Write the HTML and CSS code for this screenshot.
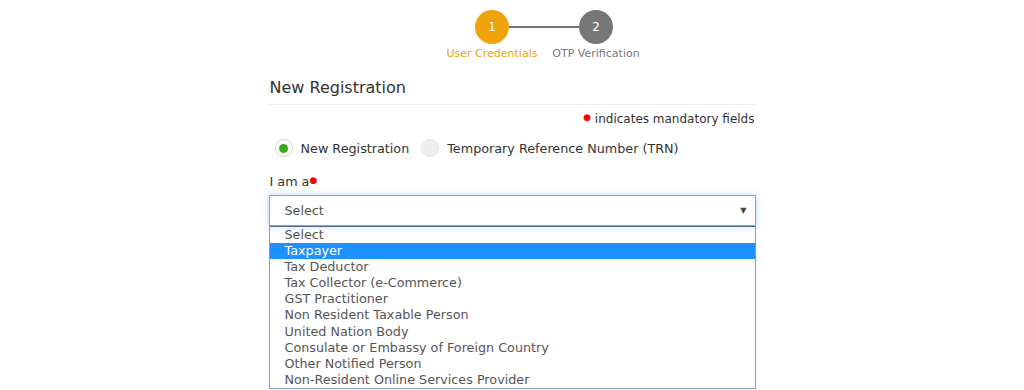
FILE: index.html
```html
<!DOCTYPE html>
<html lang="en">
<head>
  <meta charset="UTF-8">
  <title>New Registration</title>
  <link rel="stylesheet" href="styles.css">
</head>
<body>
  <div class="steps">
    <div class="step active">
      <div class="step-circle">1</div>
      <div class="step-label">User Credentials</div>
    </div>
    <div class="step-line"></div>
    <div class="step">
      <div class="step-circle">2</div>
      <div class="step-label">OTP Verification</div>
    </div>
  </div>

  <div class="panel">
    <h2 class="panel-title">New Registration</h2>
    <p class="mandatory"><span class="req">&#9679;</span> indicates mandatory fields</p>

    <div class="radio-row">
      <label class="radio checked"><span class="radio-dot"></span>New Registration</label>
      <label class="radio"><span class="radio-dot"></span>Temporary Reference Number (TRN)</label>
    </div>

    <div class="field-label">I am a<span class="req">&#9679;</span></div>
    <div class="select-box">
      <span>Select</span>
      <span class="caret">&#9660;</span>
    </div>
    <ul class="options">
      <li>Select</li>
      <li class="hover">Taxpayer</li>
      <li>Tax Deductor</li>
      <li>Tax Collector (e-Commerce)</li>
      <li>GST Practitioner</li>
      <li>Non Resident Taxable Person</li>
      <li>United Nation Body</li>
      <li>Consulate or Embassy of Foreign Country</li>
      <li>Other Notified Person</li>
      <li>Non-Resident Online Services Provider</li>
    </ul>
  </div>
</body>
</html>
```

FILE: styles.css
```css
body {
  margin: 0;
  background: #fff;
  font-family: 'DejaVu Sans', Verdana, sans-serif;
  color: #333;
  overflow: hidden;
}
.steps { display: flex; justify-content: center; align-items: flex-start; padding: 10px 0 0 64px; }
.step { display: flex; flex-direction: column; align-items: center; width: 104px; }
.step-circle {
  width: 34px; height: 34px; border-radius: 50%;
  background: #777; color: #fff;
  font-size: 12px; line-height: 34px; text-align: center;
}
.step.active .step-circle { background: #f0a30a; }
.step-label { font-size: 11px; color: #777; margin-top: 3px; white-space: nowrap; }
.step.active .step-label { color: #f0a30a; }
.step-line { width: 70px; height: 2px; background: #777; margin: 16px -35px 0; }
.panel { width: 487px; margin: 0 auto; padding-top: 9px; }
.panel-title {
  font-size: 16px; font-weight: normal; color: #333;
  margin: 0; padding: 9px 0 7px 1px;
  border-bottom: 1px solid #eee;
}
.mandatory { text-align: right; font-size: 12px; margin: 7px 1px 0 0; }
.req { color: #f00; font-size: 9px; vertical-align: 3px; }
.radio-row { display: flex; gap: 12px; margin: 13px 0 0 6px; font-size: 12.75px; }
.radio { display: flex; align-items: center; gap: 8px; }
.radio-dot {
  width: 16px; height: 16px; border-radius: 50%;
  background: #eee; border: 1px solid #e6e6e6;
  display: flex; align-items: center; justify-content: center;
}
.radio.checked .radio-dot { background: #fff; border-color: #c8dcc0; }
.radio.checked .radio-dot::after { content: ''; width: 9px; height: 9px; border-radius: 50%; background: #3aaa1a; }
.field-label { font-size: 12.75px; margin: 17px 0 6px 1px; }
.select-box {
  height: 29px; border: 1px solid #66afe9; box-shadow: 0 0 6px rgba(102,175,233,.5);
  display: flex; align-items: center; justify-content: space-between;
  padding: 0 8px 0 15px; font-size: 12.75px; color: #555;
}
.caret { font-size: 8px; color: #444; }
.options {
  list-style: none; margin: 0; padding: 0;
  border: 1px solid #7a9cd3; border-top-color: #4a6a9a;
  font-size: 12.75px; color: #555;
}
.options li { height: 16.1px; line-height: 16px; padding-left: 15px; }
.options li.hover { background: #1e90ff; color: #fff; }
```
